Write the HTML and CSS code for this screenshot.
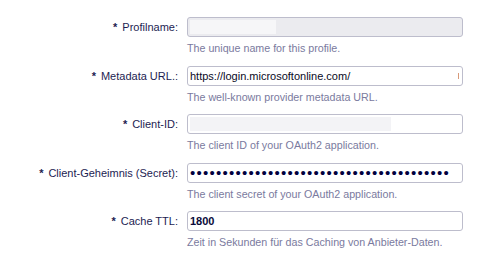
FILE: index.html
```html
<!DOCTYPE html>
<html>
<head>
	<meta charset="utf-8">
	<title>OAuth2 Profil</title>
	<link rel="stylesheet" href="styles.css">
</head>
<body>
	<div class="form">
		<div class="row">
			<label class="lbl"><span class="req">*</span>Profilname:</label>
			<div class="field">
				<div class="box box-name"><span class="blur-a"></span></div>
				<div class="help">The unique name for this profile.</div>
			</div>
		</div>
		<div class="row">
			<label class="lbl"><span class="req">*</span>Metadata URL.:</label>
			<div class="field">
				<div class="box box-url"><span class="val">https://login.microsoftonline.com/</span><span class="mark"></span></div>
				<div class="help">The well-known provider metadata URL.</div>
			</div>
		</div>
		<div class="row">
			<label class="lbl"><span class="req">*</span>Client-ID:</label>
			<div class="field">
				<div class="box box-id"><span class="blur-b"></span></div>
				<div class="help">The client ID of your OAuth2 application.</div>
			</div>
		</div>
		<div class="row">
			<label class="lbl"><span class="req">*</span>Client-Geheimnis (Secret):</label>
			<div class="field">
				<div class="box"><span class="dots">••••••••••••••••••••••••••••••••••••••••</span></div>
				<div class="help">The client secret of your OAuth2 application.</div>
			</div>
		</div>
		<div class="row">
			<label class="lbl"><span class="req">*</span>Cache TTL:</label>
			<div class="field">
				<div class="box"><span class="val num">1800</span></div>
				<div class="help">Zeit in Sekunden für das Caching von Anbieter-Daten.</div>
			</div>
		</div>
	</div>
</body>
</html>
```
FILE: styles.css
```css
body{
	margin:0;
	background:#fff;
	font-family:"Liberation Sans", Arial, sans-serif;
	font-size:11px;
}
.form{
	padding-top:17px;
}
.row{
	display:grid;
	grid-template-columns:178px 276px;
	column-gap:9px;
	align-items:start;
	margin-bottom:10.5px;
}
.lbl{
	text-align:right;
	line-height:20px;
	color:#1d1d52;
	font-size:11px;
}
.req{
	font-weight:bold;
	margin-right:5px;
}
.box{
	height:20px;
	box-sizing:border-box;
	border:1px solid #bdbdcc;
	border-radius:3px;
	background:#fff;
	display:flex;
	align-items:center;
	padding:0 2px;
	overflow:hidden;
}
.box-name{
	background:#ebebef;
}
.blur-a{
	width:86px;
	height:14px;
	background:#f6f6f8;
}
.blur-b{
	width:201px;
	height:14px;
	background:#f3f3f6;
}
.box-url{
	justify-content:space-between;
}
.val{
	color:#0a0a1e;
	font-size:11px;
}
.num{
	font-weight:bold;
	color:#0a0a3a;
}
.mark{
	width:1px;
	height:6px;
	margin-right:1px;
	background:#d89a7a;
}
.dots{
	color:#000040;
	font-size:15px;
	letter-spacing:1.25px;
	line-height:14px;
}
.help{
	margin-top:4px;
	line-height:14px;
	font-size:10.7px;
	color:#7a7a9e;
}
```
